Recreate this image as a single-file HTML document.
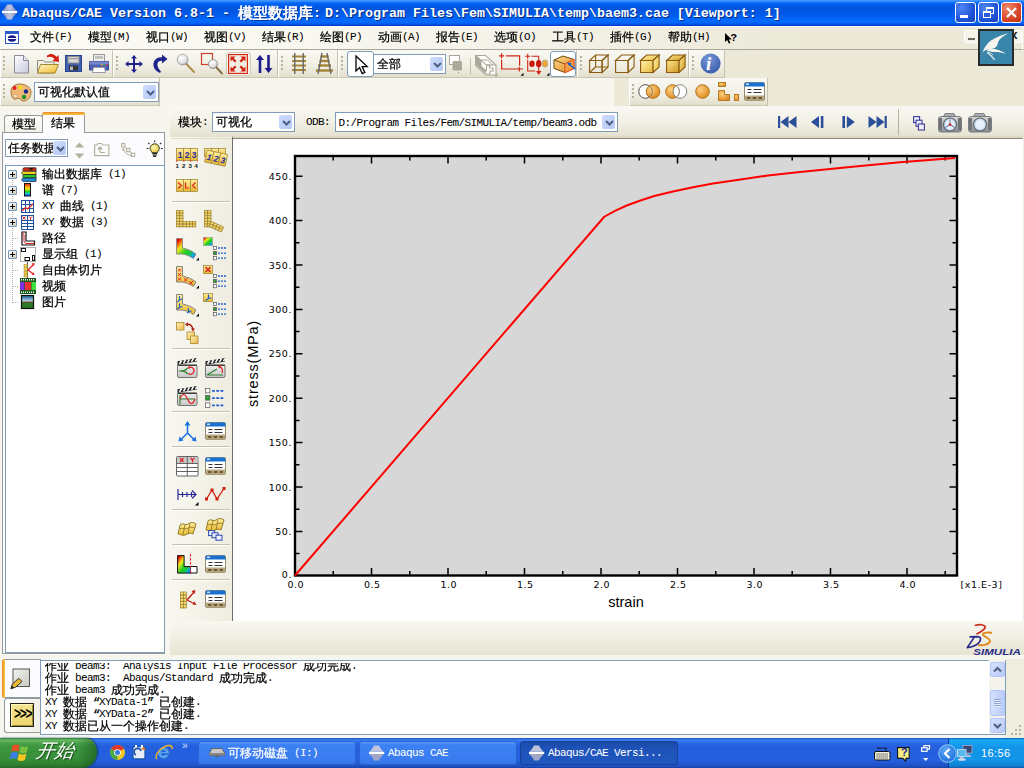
<!DOCTYPE html>
<html><head><meta charset="utf-8">
<title>Abaqus/CAE</title>
<style>
*{box-sizing:border-box;margin:0;padding:0}
html,body{width:1024px;height:768px;overflow:hidden;background:#f7f6ee}
body{position:relative;font-family:"Liberation Mono","WenQuanYi Zen Hei","Noto Sans CJK SC",monospace;font-size:12px;color:#000;line-height:14px}
.a{position:absolute}
svg{position:absolute;overflow:visible}
.t{position:absolute;white-space:pre;font-size:12px;line-height:14px}
.l{font-family:"Liberation Mono",monospace;font-size:11px;letter-spacing:-.6px;-webkit-text-stroke-width:.05px}
.c{font-family:"Liberation Mono","WenQuanYi Zen Hei","Noto Sans CJK SC",monospace;font-size:12px;letter-spacing:0;-webkit-text-stroke-width:.25px}
#title{left:0;top:0;width:1024px;height:26px;background:linear-gradient(#4a9cff 0,#2a86ff 1.5px,#0468f8 3px,#0058e6 6px,#0055e0 9px,#005ae8 14px,#0466fa 19px,#056cff 22px,#0458ec 24px,#0038c0 26px)}
#title .tt{position:absolute;left:22px;top:6px;color:#fff;font-weight:bold;white-space:pre;font-family:"Liberation Mono",monospace;font-size:13.33px;line-height:16px;text-shadow:1px 1px 0 #0a2a80}
#title .tt span{font-family:"Liberation Mono","WenQuanYi Zen Hei","Noto Sans CJK SC",monospace;font-size:15px;letter-spacing:0;-webkit-text-stroke:.7px #fff;position:relative;top:.6px}
#title .tt b{margin-right:-4px}
.wb{position:absolute;top:2px;width:21px;height:21px;border:1px solid #fff;border-radius:3px;background:radial-gradient(circle at 30% 25%,#4f86f5,#1f54d8 60%,#1641b8)}
.wb i{position:absolute;display:block}
.wb.x{background:radial-gradient(circle at 30% 25%,#f08866,#d9462a 60%,#b5300f)}
#menu{left:0;top:26px;width:1024px;height:23px;background:#ece9d8;border-top:1px solid #fff}
#menu .lt{position:absolute;left:0;top:0;width:800px;height:23px;background:linear-gradient(90deg,#fbfaf5 0,#f8f7f0 40%,#f2f0e5 75%,#ece9d8 100%)}
#menuline{left:0;top:49px;width:1024px;height:1px;background:#aca899}
.mi{position:absolute;top:30px;white-space:pre}
.tb{position:absolute;background:linear-gradient(#f9f8f2,#f1efe4 60%,#e3dfcd);border-right:1px solid #c5c2b0;border-bottom:1px solid #c9c6b4;border-left:1px solid #fff}
.grip{position:absolute;width:2px;background:repeating-linear-gradient(#b8b4a2 0 2px,transparent 2px 4px)}
.dd{position:absolute;background:#fff;border:1px solid #7f9db9;height:20px}
.dd .bt{position:absolute;right:2px;top:2px;width:13px;height:14px;border-radius:2px;background:linear-gradient(135deg,#d0dcfd,#b4c7f7)}
.dd .bt.s2{top:1px;right:1px;height:14px}
.dd .tx{position:absolute;left:3px;top:2.5px;white-space:pre}
.hb{position:absolute;background:#fff;border:1px solid #7f9db9;border-radius:3px}
.q{display:inline-block;width:6px;overflow:visible}
span.c{position:relative;top:.6px}
</style></head><body>
<!-- TITLE -->
<div class="a" id="title">
<svg style="left:2px;top:4px" width="16" height="16" viewBox="0 0 16 16" ><defs><linearGradient id="gapp" x1="0" y1="0" x2="1" y2="0"><stop offset="0" stop-color="#8088b8"/><stop offset=".5" stop-color="#c4c6e0"/><stop offset="1" stop-color="#8088b8"/></linearGradient></defs><path d="M5 .5h5c1 2.500 3 4.500 4.700 6.300h-14.400c1.700-1.800 3.700-3.800 4.700-6.300z" fill="url(#gapp)"/><rect x="0" y="6.900" width="15.200" height="2.100" fill="#fff"/><path d="M.300 9.100h14.400c-1.700 1.800-3.700 3.800-4.700 6.300h-5c-1-2.500-3-4.500-4.700-6.300z" fill="url(#gapp)"/></svg>
<div class="tt">Abaqus/CAE Version 6.8-1 - <span>模型数据库</span><b>:</b> D:\Program Files\Fem\SIMULIA\temp\baem3.cae [Viewport: 1]</div>
<div class="wb" style="left:955px"><i style="left:4px;top:12px;width:8px;height:3px;background:#fff"></i></div>
<div class="wb" style="left:978px"><i style="left:7px;top:4px;width:8px;height:7px;border:1px solid #fff;border-top-width:2px"></i><i style="left:4px;top:8px;width:8px;height:7px;border:1px solid #fff;border-top-width:2px;background:#2a5bd8"></i></div>
<div class="wb x" style="left:1001px"><svg width="19" height="19" viewBox="0 0 19 19" style="position:absolute;left:0;top:0"><path d="M5 5l9 9M14 5l-9 9" stroke="#fff" stroke-width="2.2"/></svg></div>
</div>
<!-- MENU -->
<div class="a" id="menu"><div class="lt"></div></div>
<div class="a" id="menuline"></div>
<svg style="left:5px;top:31px" width="14" height="13" viewBox="0 0 14 13" ><rect x=".5" y=".5" width="13" height="12" fill="#fff" stroke="#2a5bc7"/><rect x="1" y="1" width="12" height="2" fill="#2a5bc7"/><ellipse cx="7" cy="7.5" rx="4.2" ry="3.2" fill="#1a1a8a"/><rect x="2" y="7" width="10" height="1" fill="#fff"/></svg>
<div class="mi" style="left:30px"><span class="c">文件</span><span class="l">(F)</span></div>
<div class="mi" style="left:88px"><span class="c">模型</span><span class="l">(M)</span></div>
<div class="mi" style="left:146px"><span class="c">视口</span><span class="l">(W)</span></div>
<div class="mi" style="left:204px"><span class="c">视图</span><span class="l">(V)</span></div>
<div class="mi" style="left:262px"><span class="c">结果</span><span class="l">(R)</span></div>
<div class="mi" style="left:320px"><span class="c">绘图</span><span class="l">(P)</span></div>
<div class="mi" style="left:378px"><span class="c">动画</span><span class="l">(A)</span></div>
<div class="mi" style="left:436px"><span class="c">报告</span><span class="l">(E)</span></div>
<div class="mi" style="left:494px"><span class="c">选项</span><span class="l">(O)</span></div>
<div class="mi" style="left:552px"><span class="c">工具</span><span class="l">(T)</span></div>
<div class="mi" style="left:610px"><span class="c">插件</span><span class="l">(G)</span></div>
<div class="mi" style="left:668px"><span class="c">帮助</span><span class="l">(H)</span></div>
<svg style="left:724px;top:32px" width="16" height="13" viewBox="0 0 16 13" ><path d="M1 1v9l2.2-2 1.6 3.6 1.6-.7-1.6-3.5h3z" fill="#000"/></svg><div class="t l" style="left:730.5px;top:31px;font-weight:bold;font-size:11px">?</div>
<div class="a" style="left:964px;top:30px;width:58px;height:13px;background:#f4f3ea;border:1px solid #fff;border-radius:2px"></div>
<div class="a" style="left:968px;top:38px;width:7px;height:2px;background:#6b6a60"></div>
<div class="a l" style="left:1010px;top:29px;font-size:13px;font-weight:bold;color:#222">x</div>
<div class="a" style="left:1022px;top:26px;width:1px;height:24px;background:#fbfaf4"></div>
<!-- TOOLBARS -->
<div class="a" style="left:0;top:50px;width:1024px;height:56px;background:#ece9d8"></div>
<div class="a" style="left:160px;top:78px;width:454px;height:28px;background:#f7f6ee"></div>
<div class="tb" style="left:0px;top:50px;width:113px;height:28px"></div>
<div class="grip" style="left:3px;top:56px;height:16px"></div>
<div class="tb" style="left:113px;top:50px;width:165px;height:28px"></div>
<div class="grip" style="left:116px;top:56px;height:16px"></div>
<div class="tb" style="left:278px;top:50px;width:60px;height:28px"></div>
<div class="grip" style="left:281px;top:56px;height:16px"></div>
<div class="tb" style="left:338px;top:50px;width:239px;height:28px"></div>
<div class="grip" style="left:341px;top:56px;height:16px"></div>
<div class="tb" style="left:577px;top:50px;width:112px;height:28px"></div>
<div class="grip" style="left:580px;top:56px;height:16px"></div>
<div class="tb" style="left:689px;top:50px;width:36px;height:28px"></div>
<div class="grip" style="left:692px;top:56px;height:16px"></div>
<div class="tb" style="left:0px;top:78px;width:160px;height:28px"></div>
<div class="grip" style="left:3px;top:84px;height:16px"></div>
<div class="tb" style="left:629px;top:78px;width:139px;height:28px"></div>
<div class="grip" style="left:632px;top:84px;height:16px"></div>
<svg style="left:13px;top:54px" width="18" height="21" viewBox="0 0 18 21" ><defs><linearGradient id="gpaper" x1="0" y1="0" x2="1" y2="1"><stop offset="0" stop-color="#fff"/><stop offset="1" stop-color="#c8c8e0"/></linearGradient></defs><path d="M1.500 1.500h9l5 5v12.500h-14z" fill="url(#gpaper)" stroke="#8a8a96"/><path d="M10.500 1.500v5h5" fill="#e8e8f0" stroke="#8a8a96"/></svg>
<svg style="left:36px;top:52px" width="25" height="23" viewBox="0 0 25 23" ><defs><linearGradient id="gfold" x1="0" y1="0" x2="1" y2="1"><stop offset="0" stop-color="#fff8d0"/><stop offset="1" stop-color="#f0b820"/></linearGradient></defs><path d="M1.500 8.500h6l1.500 1.500h9v11h-16.500z" fill="#f4f0e0" stroke="#8a8a80"/><path d="M4.500 12.500h18l-3.500 8.500h-17.500z" fill="url(#gfold)" stroke="#a08830"/><path d="M11 3.500c3-2.500 7-2 9.500 1.500l2-2 .5 7-6.500-1 2-2c-2-2.500-5-3-7.500-1.500z" fill="#d42010"/></svg>
<svg style="left:65px;top:55px" width="17" height="17" viewBox="0 0 17 17" ><rect x=".5" y=".5" width="16" height="16" fill="#4060b0" stroke="#2a4490"/><rect x="3" y="1.500" width="11" height="6.500" fill="#d8d8d8" stroke="#888"/><rect x="4" y="3" width="9" height="1.200" fill="#999"/><rect x="4" y="10.500" width="9" height="5" fill="#333"/><rect x="5" y="11.500" width="3" height="3.500" fill="#bbb"/></svg>
<svg style="left:88px;top:53px" width="22" height="21" viewBox="0 0 22 21" ><rect x="5.500" y="1.500" width="11" height="7" fill="#eee" stroke="#999"/><rect x="7" y="3.200" width="8" height="2.500" fill="#bbb"/><path d="M1.500 8.500h19v8.500h-19z" fill="#5060b0" stroke="#38489a"/><rect x="1.500" y="8.500" width="19" height="3" fill="#7888d0"/><rect x="13" y="11" width="1.500" height="1.500" fill="#f0a020"/><rect x="15.500" y="11" width="1.500" height="1.500" fill="#30c040"/><rect x="18" y="11" width="1.500" height="1.500" fill="#e03030"/><path d="M5.500 14.500h11l1 5h-13z" fill="#fff" stroke="#99a"/></svg>
<svg style="left:124px;top:54px" width="20" height="20" viewBox="0 0 20 20" ><path d="M10 1l3 3.600h-2v4.400h4.400v-2l3.600 3-3.600 3v-2h-4.400v4.400h2l-3 3.600-3-3.600h2v-4.400h-4.400v2l-3.600-3 3.600-3v2h4.400v-4.400h-2z" fill="#23238e"/></svg>
<svg style="left:152px;top:54px" width="16" height="20" viewBox="0 0 16 20" ><path d="M8 19c-5-2-8-7-6-11.500 1.500-3 4.500-4.500 8-4.200v-2.800l5.500 4.500-5.500 4.500v-2.800c-2.500-.2-4 .8-4.500 2.800-.6 2.500 1 5.500 3.500 8z" fill="#23238e"/></svg>
<svg style="left:176px;top:53px" width="20" height="21" viewBox="0 0 20 21" ><defs><radialGradient id="glens" cx=".4" cy=".35" r=".7"><stop offset="0" stop-color="#fff"/><stop offset=".7" stop-color="#e0e0e0"/><stop offset="1" stop-color="#909090"/></radialGradient></defs><path d="M9.500 10l8.500 9" stroke="#b09050" stroke-width="2" stroke-linecap="round"/><circle cx="6.600" cy="6.600" r="5.400" fill="url(#glens)" stroke="#999" stroke-width=".8"/></svg>
<svg style="left:200px;top:52px" width="24" height="23" viewBox="0 0 24 23" ><rect x="1.500" y="1.500" width="11" height="11" fill="none" stroke="#d04030" stroke-width="1.200"/><path d="M15 14l7 7.500" stroke="#a08050" stroke-width="2" stroke-linecap="round"/><path d="M16 15l6 6.500" stroke="#333" stroke-width=".6"/><circle cx="13" cy="12" r="4.500" fill="url(#glens)" stroke="#888" stroke-width=".8"/></svg>
<div class="a" style="left:226px;top:52px;width:25px;height:24px;background:#f3f2ea;border:1px solid #cfccbc;border-radius:3px"></div>
<svg style="left:227px;top:53px" width="22" height="22" viewBox="0 0 22 22" ><rect x="1.500" y="1.500" width="19" height="19" fill="#efede5" stroke="#d42a10" stroke-width="1"/><rect x="2.500" y="2.500" width="17" height="17" fill="none" stroke="#f0b0a0" stroke-width=".6"/><path d="M3.500 3.500h5l-1.700 1.700 2.700 2.700-1.600 1.600-2.700-2.700-1.700 1.700zM18.500 3.500v5l-1.700-1.700-2.700 2.700-1.600-1.600 2.700-2.700-1.700-1.700zM3.500 18.500v-5l1.700 1.700 2.700-2.700 1.600 1.600-2.700 2.700 1.700 1.700zM18.500 18.500h-5l1.700-1.700-2.700-2.700 1.600-1.600 2.700 2.700 1.700-1.700z" fill="#d42010"/></svg>
<svg style="left:255px;top:54px" width="20" height="20" viewBox="0 0 20 20" ><path d="M5 1l4 5h-2.700v13h-2.600v-13h-2.700zM13.500 19l4-5h-2.700v-13h-2.600v13h-2.700z" fill="#1c1c8c"/></svg>
<svg style="left:291px;top:53px" width="16" height="21" viewBox="0 0 16 21" ><path d="M1 3.500h14M1 8h14M1 12.500h14M1 17h14" stroke="#a88838" stroke-width="2.200"/><path d="M3.800 0v21M12.200 0v21" stroke="#686868" stroke-width="1.400"/></svg>
<svg style="left:315px;top:53px" width="19" height="21" viewBox="0 0 19 21" ><path d="M5.500 3.500h8M4.500 8h10M3 12.500h13M1 17.500h17" stroke="#a88838" stroke-width="2.400"/><path d="M7 0l-4 21M12 0l4 21" stroke="#686868" stroke-width="1.400"/></svg>
<div class="hb" style="left:347px;top:51px;width:27px;height:26px"></div>
<svg style="left:355px;top:55px" width="14" height="20" viewBox="0 0 14 20" ><path d="M1 1v15l3.600-3.400 2.600 6 2.600-1.100-2.600-5.900h5z" fill="#fff" stroke="#000" stroke-width="1.300"/></svg>
<svg style="left:449px;top:55px" width="14" height="18" viewBox="0 0 14 18" ><rect x=".5" y=".5" width="10" height="9" fill="#fff" stroke="#a8a598"/><rect x="3.500" y="6" width="9.500" height="9.500" rx="1.500" fill="#aca899"/><rect x="9" y="17" width="1" height="1" fill="#888"/></svg>
<div class="a" style="left:470px;top:58px;width:1px;height:17px;background:#c5c2b0"></div>
<svg style="left:475px;top:53px" width="23" height="24" viewBox="0 0 23 24" ><path d="M.600 2.500h10l10.400 9.500v10h-10l-10.400-9.500z" fill="#fdfdfa" stroke="#aca899" stroke-width="1.100"/><path d="M.600 2.500v9l10.400 9.500v-9z" fill="#aca899"/><path d="M.600 2.500l10.400 9.500h10" fill="none" stroke="#aca899" stroke-width="1.100"/><path d="M6 7h6.500l5 5h-6.500zM6 7v6l5.500 5v-6z" fill="#fdfdfa" stroke="#aca899" stroke-width="1"/><path d="M11.500 12h3v3h3.500v3h-3v3h-3.500" fill="none" stroke="#aca899" stroke-width="1.200"/><path d="M22.500 20.500v3h-3z" fill="#aca899"/></svg>
<svg style="left:499px;top:53px" width="25" height="23" viewBox="0 0 25 23" ><path d="M7 2.900h13.600v9.800M2.600 6.800v9.200h14.400" fill="none" stroke="#d02818" stroke-width="1.200"/><path d="M0 2.900h5.200M2.600 .3v5.200M17 16h7M20.300 13.700v4.800" stroke="#d02818" stroke-width="1.200"/><path d="M24.500 19.800v2.900h-3z" fill="#000"/></svg>
<svg style="left:525px;top:53px" width="25" height="23" viewBox="0 0 25 23" ><path d="M6.500 3.200h7.200v17M2.700 6.800v11.200h7.500" fill="none" stroke="#d02818" stroke-width="1.100"/><path d="M.200 3.200h5M2.700 .7v5M12 18.500l1.700 2.500 1.700-2.500z" stroke="#d02818" stroke-width="1.100" fill="#d02818"/><ellipse cx="7" cy="10.700" rx="2.700" ry="3.300" fill="#cc1808"/><ellipse cx="13.700" cy="10.700" rx="2.700" ry="3.600" fill="#cc1808"/><rect x="17.500" y="7.200" width="5" height="6.800" rx="1.800" fill="#f0a830" stroke="#a8a090" stroke-width=".8"/><path d="M24.500 19.800v2.900h-3z" fill="#000"/></svg>
<div class="hb" style="left:550px;top:51px;width:26px;height:26px"></div>
<svg style="left:553px;top:55px" width="22" height="18" viewBox="0 0 22 18" ><defs><linearGradient id="gor" x1="0" y1="0" x2="1" y2="1"><stop offset="0" stop-color="#ffd890"/><stop offset="1" stop-color="#e08818"/></linearGradient></defs><path d="M1 5l9-4 11 3.500v9l-9 4-11-4z" fill="url(#gor)" stroke="#6a4a10" stroke-width="1"/><path d="M1 5l11 4v8.500M12 9l9-4.500" fill="none" stroke="#6a4a10" stroke-width=".9"/><path d="M12 9l9-4.500v9l-9 4z" fill="#f0a040" stroke="#f06030" stroke-width="1.200"/><path d="M22 14l-6-5" stroke="#1060d0" stroke-width="1.600"/><path d="M14 7.500l4.500.5-2.500 3z" fill="#1060d0"/></svg>
<svg style="left:589px;top:54px" width="20" height="19" viewBox="0 0 20 19" ><defs><linearGradient id="gy" x1="0" y1="0" x2="1" y2="1"><stop offset="0" stop-color="#fff4b0"/><stop offset="1" stop-color="#e8b838"/></linearGradient><linearGradient id="gy2" x1="0" y1="0" x2="1" y2="1"><stop offset="0" stop-color="#ffe890"/><stop offset="1" stop-color="#d09820"/></linearGradient></defs><path d="M.600 6.500h12.500v12h-12.500z" fill="none" stroke="#8a5a10" stroke-width="1.100"/><path d="M.600 6.500l6-5.500h12.500l-6 5.500z" fill="none" stroke="#8a5a10" stroke-width="1.100"/><path d="M13.100 6.500l6-5.500v12l-6 5.500z" fill="none" stroke="#8a5a10" stroke-width="1.100"/><path d="M6.600 1v12h12.500M6.600 13l-6 5.500" fill="none" stroke="#8a5a10" stroke-width="1.100"/></svg>
<svg style="left:615px;top:54px" width="20" height="19" viewBox="0 0 20 19" ><defs><linearGradient id="gy" x1="0" y1="0" x2="1" y2="1"><stop offset="0" stop-color="#fff4b0"/><stop offset="1" stop-color="#e8b838"/></linearGradient><linearGradient id="gy2" x1="0" y1="0" x2="1" y2="1"><stop offset="0" stop-color="#ffe890"/><stop offset="1" stop-color="#d09820"/></linearGradient></defs><path d="M.600 6.500h12.500v12h-12.500z" fill="none" stroke="#8a5a10" stroke-width="1.100"/><path d="M.600 6.500l6-5.500h12.500l-6 5.500z" fill="none" stroke="#8a5a10" stroke-width="1.100"/><path d="M13.100 6.500l6-5.500v12l-6 5.500z" fill="none" stroke="#8a5a10" stroke-width="1.100"/></svg>
<svg style="left:640px;top:54px" width="20" height="19" viewBox="0 0 20 19" ><defs><linearGradient id="gy" x1="0" y1="0" x2="1" y2="1"><stop offset="0" stop-color="#fff4b0"/><stop offset="1" stop-color="#e8b838"/></linearGradient><linearGradient id="gy2" x1="0" y1="0" x2="1" y2="1"><stop offset="0" stop-color="#ffe890"/><stop offset="1" stop-color="#d09820"/></linearGradient></defs><path d="M.600 6.500h12.500v12h-12.500z" fill="url(#gy)" stroke="#8a5a10" stroke-width="1.100"/><path d="M.600 6.500l6-5.500h12.500l-6 5.500z" fill="url(#gy)" stroke="#8a5a10" stroke-width="1.100"/><path d="M13.100 6.500l6-5.500v12l-6 5.500z" fill="url(#gy)" stroke="#8a5a10" stroke-width="1.100"/></svg>
<svg style="left:666px;top:54px" width="20" height="19" viewBox="0 0 20 19" ><defs><linearGradient id="gy" x1="0" y1="0" x2="1" y2="1"><stop offset="0" stop-color="#fff4b0"/><stop offset="1" stop-color="#e8b838"/></linearGradient><linearGradient id="gy2" x1="0" y1="0" x2="1" y2="1"><stop offset="0" stop-color="#ffe890"/><stop offset="1" stop-color="#d09820"/></linearGradient></defs><path d="M.600 6.500h12.500v12h-12.500z" fill="url(#gy2)" stroke="#8a5a10" stroke-width="1.100"/><path d="M.600 6.500l6-5.500h12.500l-6 5.500z" fill="url(#gy2)" stroke="#8a5a10" stroke-width="1.100"/><path d="M13.100 6.500l6-5.500v12l-6 5.500z" fill="url(#gy2)" stroke="#8a5a10" stroke-width="1.100"/></svg>
<svg style="left:700px;top:53px" width="22" height="22" viewBox="0 0 22 22" ><defs><radialGradient id="ginfo" cx=".4" cy=".3" r=".8"><stop offset="0" stop-color="#7898d8"/><stop offset="1" stop-color="#3458a8"/></radialGradient></defs><circle cx="10.600" cy="10.500" r="10" fill="url(#ginfo)"/></svg><div class="a" style="left:706px;top:53px;font-family:'Liberation Serif',serif;font-style:italic;font-weight:bold;font-size:19px;line-height:21px;color:#fff">i</div>
<svg style="left:9px;top:83px" width="23" height="19" viewBox="0 0 23 19" ><path d="M2 8c0-4 4-7 9-7s11 3 11 8-3 9-8 9c-2 0-2-2-4-2.500s-3 1.500-5 .5-3-4-3-8z" fill="#f0b878" stroke="#a87838" stroke-width="1"/><circle cx="5.500" cy="5" r="2" fill="#e02020"/><circle cx="11.500" cy="4.500" r="2" fill="#f0e020"/><circle cx="17" cy="8.500" r="2.200" fill="#182890"/><circle cx="15" cy="14" r="2.200" fill="#189030"/><ellipse cx="6.500" cy="13" rx="2" ry="1.300" fill="#fff" stroke="#a87838" stroke-width=".5"/></svg>
<svg style="left:638px;top:84px" width="23" height="15" viewBox="0 0 23 15" ><defs><radialGradient id="gorb" cx=".35" cy=".35" r=".8"><stop offset="0" stop-color="#ffd080"/><stop offset="1" stop-color="#d88010"/></radialGradient></defs><circle cx="7.500" cy="7.500" r="6.800" fill="#fff" stroke="#777" stroke-width=".9"/><circle cx="15" cy="7.500" r="6.800" fill="url(#gorb)" stroke="#a86810" stroke-width=".9"/><circle cx="7.500" cy="7.500" r="6.800" fill="none" stroke="#777" stroke-width=".9"/></svg>
<svg style="left:665px;top:84px" width="23" height="15" viewBox="0 0 23 15" ><circle cx="15" cy="7.500" r="6.800" fill="#fff" stroke="#777" stroke-width=".9"/><circle cx="7.500" cy="7.500" r="6.800" fill="url(#gorb)" stroke="#a86810" stroke-width=".9"/><path d="M11.250 1.800a6.800 6.800 0 0 1 0 11.400a6.800 6.800 0 0 1 0-11.400z" fill="#fff" stroke="#777" stroke-width=".9"/></svg>
<svg style="left:695px;top:84px" width="15" height="15" viewBox="0 0 15 15" ><circle cx="7.500" cy="7.500" r="6.800" fill="url(#gorb)" stroke="#a86810" stroke-width=".9"/></svg>
<svg style="left:718px;top:82px" width="22" height="19" viewBox="0 0 22 19" ><rect x=".5" y=".5" width="7" height="4" fill="url(#gorb)" stroke="#a86810" stroke-width=".8"/><path d="M.500 8.500h6v4h5v6h-11z" fill="url(#gorb)" stroke="#a86810" stroke-width=".8"/><rect x="16.500" y="12.500" width="4" height="6" fill="url(#gorb)" stroke="#a86810" stroke-width=".8"/></svg>
<svg style="left:744px;top:82px" width="21" height="19" viewBox="0 0 21 19" ><rect x=".5" y=".5" width="20" height="18" rx="1.500" fill="#fff" stroke="#8a8060" stroke-width=".9"/><path d="M.500 4.500v-2.500a1.500 1.500 0 0 1 1.500-1.500h17a1.500 1.500 0 0 1 1.500 1.500v2.500z" fill="#1870d0"/><rect x="2" y="1.600" width="3" height="1.200" fill="#fff"/><path d="M3.500 7.500h4M9.500 7.500h8M3.500 10.500h4M9.500 10.500h8" stroke="#333" stroke-width="1.100"/><rect x="1" y="13.5" width="19" height="5" fill="#b8a880"/><path d="M3 16h3.500M8.75 16h3.500M14.5 16h3.500" stroke="#6a5a38" stroke-width="2"/></svg>
<div class="dd" style="left:373px;top:54px;width:73px"><div class="tx c">全部</div><div class="bt s"><svg style="left:2.500px;top:4.500px" width="9" height="6" viewBox="0 0 9 6"><path d="M1 1l3.500 3.500 3.500-3.500" fill="none" stroke="#4d6185" stroke-width="2"/></svg></div></div>
<div class="dd" style="left:34px;top:82px;width:125px"><div class="tx c">可视化默认值</div><div class="bt s"><svg style="left:2.500px;top:4.500px" width="9" height="6" viewBox="0 0 9 6"><path d="M1 1l3.500 3.500 3.500-3.500" fill="none" stroke="#4d6185" stroke-width="2"/></svg></div></div>
<svg style="left:978px;top:29px" width="36" height="37" viewBox="0 0 36 37" ><rect x="1" y="1" width="34" height="35" fill="#3a86aa" stroke="#2a2a2a" stroke-width="2"/><path d="M30.500 4.200c-5 1.300-9 2.800-12.500 4.600-4 2-6.500 3.500-8.500 6-2.500 3-4.500 6-4.500 8.500 1.500-1.500 2.500-2.200 4-2.500 3-.5 6-.8 8-2 2.500-1.500 2.500-4 3.500-6.500 1.200-3 5-5.500 10-8.100z" fill="#f6f4ec"/><path d="M8.500 21.500c3-1.600 6.500-1.800 10-1 3.500.8 6.500 2.200 9.500 4.200-4-1.200-7.500-1.800-10.500-1.800-3.500 0-6 .2-9-1.400z" fill="#f6f4ec"/><path d="M9 23.500c1.500.8 3 2 4.200 3.300s2.500 2.800 3.500 4" stroke="#f6f4ec" stroke-width="1.200" fill="none"/><path d="M10 23c2 .5 3.500 1.500 5 3" stroke="#f6f4ec" stroke-width=".8" fill="none"/></svg>
<!-- LEFT -->
<div class="a" style="left:4px;top:115px;width:39px;height:18px;border:1px solid #919b9c;border-bottom:none;border-radius:3px 3px 0 0;background:linear-gradient(#fdfdfb,#f1f0e8)"></div>
<div class="a" style="left:2px;top:132px;width:163px;height:522px;background:#fcfcfe;border:1px solid #919b9c"></div>
<div class="a" style="left:42px;top:112px;width:43px;height:21px;border:1px solid #919b9c;border-bottom:none;border-radius:3px 3px 0 0;background:#fcfcfe"></div>
<div class="a" style="left:42px;top:112px;width:43px;height:3px;border-radius:3px 3px 0 0;background:linear-gradient(#e68b2c,#ffc73c)"></div>
<div class="t c" style="left:12px;top:118px">模型</div>
<div class="t c" style="left:51px;top:117px">结果</div>
<div class="dd" style="left:5px;top:139px;width:63px;height:18px"><div class="tx c" style="top:2px;left:2px;width:46px;overflow:hidden">任务数据库</div><div class="bt s2"><svg style="left:2.500px;top:4.500px" width="9" height="6" viewBox="0 0 9 6"><path d="M1 1l3.500 3.500 3.500-3.500" fill="none" stroke="#4d6185" stroke-width="2"/></svg></div></div>
<svg style="left:74px;top:141.5px" width="12" height="18" viewBox="0 0 12 18" ><path d="M5.500 .5l4.700 5h-9.400zM5.500 16.500l4.700-5h-9.400z" fill="#b4b09e"/></svg>
<svg style="left:94px;top:143px" width="16" height="14" viewBox="0 0 16 14" ><path d="M.600 12.600v-10.600h2.400l1-1.500h3.500l1 1.500h6.400v10.600z" fill="none" stroke="#b4b09e" stroke-width="1.200"/><path d="M6 9.500v-5M3.800 6.500l2.200-2.500 2.200 2.500M6 9.500h5" fill="none" stroke="#b4b09e" stroke-width="1.200"/></svg>
<svg style="left:121px;top:143px" width="15" height="15" viewBox="0 0 15 15" ><rect x=".6" y=".6" width="3.300" height="3.300" fill="none" stroke="#b4b09e" stroke-width="1.100"/><rect x="5.600" y="5.400" width="3.300" height="3.300" fill="none" stroke="#b4b09e" stroke-width="1.100"/><rect x="10.400" y="10.200" width="3.300" height="3.300" fill="none" stroke="#b4b09e" stroke-width="1.100"/><path d="M3.900 3.900l1.700 1.500M8.900 8.700l1.500 1.500M2.300 4.500c0 4 3 7.500 8 8" fill="none" stroke="#b4b09e" stroke-width="1"/><path d="M1 5.500l1.300 3 1.700-2.500z" fill="#b4b09e"/></svg>
<svg style="left:146px;top:140px" width="18" height="19" viewBox="0 0 18 19" ><defs><radialGradient id="gbulb" cx=".4" cy=".4" r=".7"><stop offset="0" stop-color="#fff8b0"/><stop offset="1" stop-color="#e8c040"/></radialGradient></defs><path d="M8.700 .5v1.800M2.200 2.800l1.300 1.300M15.200 2.800l-1.300 1.300M.700 8.500h1.800M16.700 8.500h-1.800" stroke="#222" stroke-width="1.100"/><path d="M8.700 3.800a4.600 4.600 0 0 1 4.600 4.600c0 2-1.600 2.800-1.900 4.300h-5.400c-.3-1.500-1.900-2.300-1.900-4.300a4.600 4.600 0 0 1 4.600-4.600z" fill="url(#gbulb)" stroke="#2a3a1a" stroke-width="1"/><path d="M6.300 13.500h4.800M6.500 15h4.400M7.300 16.400h2.800" stroke="#222" stroke-width="1.100"/></svg>
<div class="a" style="left:5px;top:165px;width:160px;height:488px;background:#fff;border:1px solid #7f9db9"></div>
<div class="a" style="left:12px;top:180px;width:1px;height:123px;background:repeating-linear-gradient(#b0ae9e 0 1px,transparent 1px 2px)"></div>
<div class="a" style="left:13px;top:238px;width:6px;height:1px;background:repeating-linear-gradient(90deg,#b0ae9e 0 1px,transparent 1px 2px)"></div>
<div class="a" style="left:13px;top:270px;width:6px;height:1px;background:repeating-linear-gradient(90deg,#b0ae9e 0 1px,transparent 1px 2px)"></div>
<div class="a" style="left:13px;top:286px;width:6px;height:1px;background:repeating-linear-gradient(90deg,#b0ae9e 0 1px,transparent 1px 2px)"></div>
<div class="a" style="left:13px;top:302px;width:6px;height:1px;background:repeating-linear-gradient(90deg,#b0ae9e 0 1px,transparent 1px 2px)"></div>
<div class="a" style="left:8px;top:170px;width:9px;height:9px;border:1px solid #7898b5;border-radius:1px;background:linear-gradient(135deg,#fff,#d0ccc0)"></div><div class="a" style="left:10px;top:174px;width:5px;height:1px;background:#000"></div><div class="a" style="left:12px;top:172px;width:1px;height:5px;background:#000"></div>
<div class="t" style="left:42px;top:167px"><span class="c">输出数据库</span><span class="l"> (1)</span></div>
<div class="a" style="left:8px;top:186px;width:9px;height:9px;border:1px solid #7898b5;border-radius:1px;background:linear-gradient(135deg,#fff,#d0ccc0)"></div><div class="a" style="left:10px;top:190px;width:5px;height:1px;background:#000"></div><div class="a" style="left:12px;top:188px;width:1px;height:5px;background:#000"></div>
<div class="t" style="left:42px;top:183px"><span class="c">谱</span><span class="l"> (7)</span></div>
<div class="a" style="left:8px;top:202px;width:9px;height:9px;border:1px solid #7898b5;border-radius:1px;background:linear-gradient(135deg,#fff,#d0ccc0)"></div><div class="a" style="left:10px;top:206px;width:5px;height:1px;background:#000"></div><div class="a" style="left:12px;top:204px;width:1px;height:5px;background:#000"></div>
<div class="t" style="left:42px;top:199px"><span class="l">XY </span><span class="c">曲线</span><span class="l"> (1)</span></div>
<div class="a" style="left:8px;top:218px;width:9px;height:9px;border:1px solid #7898b5;border-radius:1px;background:linear-gradient(135deg,#fff,#d0ccc0)"></div><div class="a" style="left:10px;top:222px;width:5px;height:1px;background:#000"></div><div class="a" style="left:12px;top:220px;width:1px;height:5px;background:#000"></div>
<div class="t" style="left:42px;top:215px"><span class="l">XY </span><span class="c">数据</span><span class="l"> (3)</span></div>
<div class="t" style="left:42px;top:231px"><span class="c">路径</span></div>
<div class="a" style="left:8px;top:250px;width:9px;height:9px;border:1px solid #7898b5;border-radius:1px;background:linear-gradient(135deg,#fff,#d0ccc0)"></div><div class="a" style="left:10px;top:254px;width:5px;height:1px;background:#000"></div><div class="a" style="left:12px;top:252px;width:1px;height:5px;background:#000"></div>
<div class="t" style="left:42px;top:247px"><span class="c">显示组</span><span class="l"> (1)</span></div>
<div class="t" style="left:42px;top:263px"><span class="c">自由体切片</span></div>
<div class="t" style="left:42px;top:279px"><span class="c">视频</span></div>
<div class="t" style="left:42px;top:295px"><span class="c">图片</span></div>
<svg style="left:20px;top:167px" width="17" height="15" viewBox="0 0 17 15" ><defs><linearGradient id="grb" x1="0" y1="0" x2="0" y2="1"><stop offset="0" stop-color="#e01010"/><stop offset=".25" stop-color="#f0a010"/><stop offset=".45" stop-color="#e8e810"/><stop offset=".65" stop-color="#20d020"/><stop offset=".82" stop-color="#10c0e0"/><stop offset="1" stop-color="#1030e0"/></linearGradient></defs><path d="M4.500 .8h11.500v3.400h-11.500c-2.200 0-2.200-3.400 0-3.400z" fill="#e02818" stroke="#222" stroke-width=".8"/><path d="M3.500 4.200h12.500v3.400h-12.500c-2.200 0-2.200-3.400 0-3.400z" fill="#f0d020" stroke="#222" stroke-width=".8"/><path d="M4.500 7.600h11.500v3.400h-11.500c-2.200 0-2.200-3.400 0-3.400z" fill="#30c830" stroke="#222" stroke-width=".8"/><path d="M3.500 11h12.500v3.400h-12.500c-2.200 0-2.200-3.400 0-3.400z" fill="#2090e8" stroke="#222" stroke-width=".8"/><path d="M8 1.200h6l-3 2z" fill="#111"/></svg>
<svg style="left:24px;top:183px" width="8" height="14" viewBox="0 0 8 14" ><rect x=".5" y=".5" width="6" height="12.500" fill="url(#grb)" stroke="#111" stroke-width="1"/></svg>
<svg style="left:21px;top:200px" width="13" height="13" viewBox="0 0 13 13" ><rect x=".5" y=".5" width="12" height="12" fill="#fff" stroke="#2050a0"/><path d="M4.500 .5v12M8.500 .5v12M.500 4.500h12M.500 8.500h12" stroke="#2050a0" stroke-width="1"/><path d="M1 11l3.500-3.500 2 1.500 5.500-5" fill="none" stroke="#e02020" stroke-width="1.100"/></svg>
<svg style="left:21px;top:215px" width="13" height="15" viewBox="0 0 13 15" ><rect x=".5" y=".5" width="12" height="14" fill="#fff" stroke="#2050a0"/><path d="M6.500 .5v14M.500 5.500h12M.500 8.500h12M.500 11.500h12" stroke="#2050a0" stroke-width="1"/><path d="M1.500 1.500l3 3M4.500 1.500l-3 3M8 1.500l1.500 1.500 1.500-1.500M9.500 3v2" stroke="#e02020" stroke-width="1" fill="none"/></svg>
<svg style="left:21px;top:231px" width="14" height="15" viewBox="0 0 14 15" ><path d="M1 1h4v9h8.500v4h-12.500z" fill="#fff" stroke="#111" stroke-width="1.200"/><path d="M.800 1.500l2.200 2v6c0 2 1 3 3 3h7.500" fill="none" stroke="#e02020" stroke-width="1"/></svg>
<svg style="left:20px;top:247px" width="16" height="15" viewBox="0 0 16 15" ><rect x=".5" y=".5" width="15" height="14" fill="#fff" stroke="#b0b0b0"/><rect x="1.500" y="1.500" width="4" height="3" fill="#fff" stroke="#111"/><rect x="5" y="10.500" width="4.500" height="3" fill="#fff" stroke="#111"/><rect x="12.500" y="8.500" width="2" height="5" fill="#fff" stroke="#111"/></svg>
<svg style="left:23px;top:262px" width="12" height="16" viewBox="0 0 12 16" ><path d="M4.500 0v16" stroke="#555" stroke-width="1"/><rect x="1" y="2.500" width="3.500" height="2.500" fill="#f0d040" stroke="#a08020" stroke-width=".5"/><rect x="1" y="5.800" width="3.500" height="2.500" fill="#f0d040" stroke="#a08020" stroke-width=".5"/><rect x="1" y="9.100" width="3.500" height="2.500" fill="#f0d040" stroke="#a08020" stroke-width=".5"/><rect x="1" y="12.400" width="3.500" height="2.500" fill="#f0d040" stroke="#a08020" stroke-width=".5"/><path d="M5 8l6-6M5 8l6 4.500" stroke="#e02020" stroke-width="1.200"/><path d="M11.500 1l-3 .5 2.500 2.500zM11.500 13l-3-.3 2-2.500z" fill="#e02020"/></svg>
<svg style="left:20px;top:278px" width="16" height="16" viewBox="0 0 16 16" ><rect x="0" y="0" width="16" height="16" fill="#1a5a1a"/><path d="M1 1.800h14M1 14.200h14" stroke="#fff" stroke-width="1.400" stroke-dasharray="1 1"/><rect x="0" y="4" width="4.500" height="8" fill="#8030e0"/><rect x="5" y="4" width="6" height="8" fill="#e83030"/><rect x="11.500" y="4" width="4.500" height="8" fill="#40e040"/></svg>
<svg style="left:21px;top:295px" width="13" height="14" viewBox="0 0 13 14" ><defs><linearGradient id="gsky" x1="0" y1="0" x2="0" y2="1"><stop offset="0" stop-color="#2060a0"/><stop offset="1" stop-color="#d0e0f0"/></linearGradient></defs><rect x=".5" y=".5" width="12" height="13" fill="#2a7a2a" stroke="#111" stroke-width="1.200"/><rect x="1.200" y="1.200" width="10.600" height="5.500" fill="url(#gsky)"/><rect x="1.200" y="6.700" width="10.600" height="1" fill="#704020"/></svg>
<!-- CONTEXT -->
<div class="a" style="left:170px;top:106px;width:854px;height:31px;background:linear-gradient(#f9f8f2,#f3f1e6 50%,#e4e1cf)"></div>
<div class="t" style="left:178px;top:115px"><span class="c">模块</span><span class="l">:</span></div>
<div class="dd" style="left:212px;top:112px;width:83px"><div class="tx c">可视化</div><div class="bt s"><svg style="left:2.500px;top:4.500px" width="9" height="6" viewBox="0 0 9 6"><path d="M1 1l3.500 3.500 3.500-3.500" fill="none" stroke="#4d6185" stroke-width="2"/></svg></div></div>
<div class="t l" style="left:306px;top:115px">ODB:</div>
<div class="dd" style="left:335px;top:112px;width:283px"><div class="tx l" style="left:2.500px">D:/Program Files/Fem/SIMULIA/temp/beam3.odb</div><div class="bt s"><svg style="left:2.500px;top:4.500px" width="9" height="6" viewBox="0 0 9 6"><path d="M1 1l3.500 3.500 3.500-3.500" fill="none" stroke="#4d6185" stroke-width="2"/></svg></div></div>
<svg style="left:778px;top:116px" width="19" height="12" viewBox="0 0 19 12" ><rect x="0" y="0" width="2.200" height="12" fill="#2b4f99"/><path d="M10.500 0v12l-8-6zM18.500 0v12l-8-6z" fill="#2b4f99"/></svg>
<svg style="left:811px;top:116px" width="13" height="12" viewBox="0 0 13 12" ><path d="M8 0v12l-8-6z" fill="#2b4f99"/><rect x="9.800" y="0" width="2.600" height="12" fill="#2b4f99"/></svg>
<svg style="left:842px;top:116px" width="13" height="12" viewBox="0 0 13 12" ><rect x=".4" y="0" width="2.600" height="12" fill="#2b4f99"/><path d="M4.800 0v12l8-6z" fill="#2b4f99"/></svg>
<svg style="left:868px;top:116px" width="19" height="12" viewBox="0 0 19 12" ><path d="M.500 0v12l8-6zM8.500 0v12l8-6z" fill="#2b4f99"/><rect x="16.600" y="0" width="2.200" height="12" fill="#2b4f99"/></svg>
<div class="a" style="left:898px;top:109px;width:1px;height:26px;background:#b5b19f"></div>
<svg style="left:913px;top:115.5px" width="13" height="15" viewBox="0 0 13 15" ><rect x=".6" y=".6" width="6" height="6" fill="#f0f0fa" stroke="#3a3a9a" stroke-width="1.100"/><rect x="3" y="4.200" width="6" height="6" fill="#f0f0fa" stroke="#3a3a9a" stroke-width="1.100"/><rect x="5.400" y="8" width="6" height="6" fill="#f0f0fa" stroke="#3a3a9a" stroke-width="1.100"/></svg>
<svg style="left:938px;top:113px" width="24" height="20" viewBox="0 0 24 20" ><defs><linearGradient id="gcam" x1="0" y1="0" x2="0" y2="1"><stop offset="0" stop-color="#d8d8d8"/><stop offset="1" stop-color="#8a8e92"/></linearGradient></defs><path d="M7 .5h9l1.500 3h-12z" fill="#a8acb0" stroke="#707478" stroke-width=".8"/><rect x=".5" y="3.500" width="23" height="15.500" rx="2.500" fill="url(#gcam)" stroke="#707478" stroke-width=".9"/><rect x="1" y="5" width="3" height="12" fill="#707478"/><rect x="20" y="5" width="3" height="12" fill="#707478"/><circle cx="12" cy="11.500" r="6.500" fill="#c8dcf4" stroke="#606468" stroke-width="1.200"/><circle cx="12" cy="11.500" r="4.500" fill="#e8f2fc"/><path d="M12 11.500v-5M12 11.500l-4.500 3M12 11.500l4.500 3" stroke="#7088a8" stroke-width="1.100"/><circle cx="12" cy="11.500" r="1.300" fill="#e02020"/></svg>
<svg style="left:968px;top:113px" width="24" height="20" viewBox="0 0 24 20" ><defs><linearGradient id="gcam" x1="0" y1="0" x2="0" y2="1"><stop offset="0" stop-color="#d8d8d8"/><stop offset="1" stop-color="#8a8e92"/></linearGradient></defs><path d="M7 .5h9l1.500 3h-12z" fill="#a8acb0" stroke="#707478" stroke-width=".8"/><rect x=".5" y="3.500" width="23" height="15.500" rx="2.500" fill="url(#gcam)" stroke="#707478" stroke-width=".9"/><rect x="1" y="5" width="3" height="12" fill="#707478"/><rect x="20" y="5" width="3" height="12" fill="#707478"/><circle cx="12" cy="11.500" r="6.500" fill="#c8dcf4" stroke="#606468" stroke-width="1.200"/><circle cx="12" cy="11.500" r="4.500" fill="#e8f2fc"/></svg>
<!-- TOOLBOX -->
<div class="a" style="left:170px;top:137px;width:62px;height:484px;background:linear-gradient(90deg,#f8f7f0,#efede0)"></div>
<div class="a" style="left:171px;top:138px;width:61px;height:1px;background:#dedbc8"></div>
<div class="a" style="left:172px;top:201px;width:58px;height:1px;background:#c5c2b0"></div><div class="a" style="left:172px;top:202px;width:58px;height:1px;background:#fff"></div>
<div class="a" style="left:172px;top:348px;width:58px;height:1px;background:#c5c2b0"></div><div class="a" style="left:172px;top:349px;width:58px;height:1px;background:#fff"></div>
<div class="a" style="left:172px;top:411px;width:58px;height:1px;background:#c5c2b0"></div><div class="a" style="left:172px;top:412px;width:58px;height:1px;background:#fff"></div>
<div class="a" style="left:172px;top:446px;width:58px;height:1px;background:#c5c2b0"></div><div class="a" style="left:172px;top:447px;width:58px;height:1px;background:#fff"></div>
<div class="a" style="left:172px;top:509px;width:58px;height:1px;background:#c5c2b0"></div><div class="a" style="left:172px;top:510px;width:58px;height:1px;background:#fff"></div>
<div class="a" style="left:172px;top:544px;width:58px;height:1px;background:#c5c2b0"></div><div class="a" style="left:172px;top:545px;width:58px;height:1px;background:#fff"></div>
<div class="a" style="left:172px;top:579px;width:58px;height:1px;background:#c5c2b0"></div><div class="a" style="left:172px;top:580px;width:58px;height:1px;background:#fff"></div>
<svg style="left:176px;top:148px" width="22" height="20" viewBox="0 0 22 20" ><defs><linearGradient id="gyl" x1="0" y1="0" x2="0" y2="1"><stop offset="0" stop-color="#fff0a0"/><stop offset="1" stop-color="#e8b830"/></linearGradient></defs><rect x=".4" y=".4" width="7" height="12" fill="url(#gyl)" stroke="#9a8030" stroke-width=".7"/><rect x="7.400" y=".4" width="7" height="12" fill="url(#gyl)" stroke="#9a8030" stroke-width=".7"/><rect x="14.400" y=".4" width="7" height="12" fill="url(#gyl)" stroke="#9a8030" stroke-width=".7"/><path d="M0 13h22" stroke="#e02020" stroke-width="1" stroke-dasharray="1.500 5.500"/><g font-family="Liberation Sans,sans-serif" font-weight="bold" font-size="8.500" fill="#2828a0"><text x="1.700" y="9.500">1</text><text x="8.700" y="9.500">2</text><text x="15.700" y="9.500">3</text></g><g font-family="Liberation Sans,sans-serif" font-weight="bold" font-size="6" fill="#111"><text x="-.5" y="19.500">1</text><text x="6" y="19.500">2</text><text x="12.500" y="19.500">3</text><text x="18.500" y="19.500">4</text></g></svg>
<svg style="left:204px;top:148px" width="23" height="20" viewBox="0 0 23 20" ><rect x=".4" y=".4" width="7" height="8" fill="url(#gyl)" stroke="#9a8030" stroke-width=".7"/><rect x="7.400" y=".4" width="7" height="8" fill="url(#gyl)" stroke="#9a8030" stroke-width=".7"/><rect x="14.400" y=".4" width="7" height="8" fill="url(#gyl)" stroke="#9a8030" stroke-width=".7"/><g transform="rotate(12 11 11)"><rect x="1.400" y="4" width="7" height="12" fill="url(#gyl)" stroke="#9a8030" stroke-width=".7"/><rect x="8.400" y="4" width="7" height="12" fill="url(#gyl)" stroke="#9a8030" stroke-width=".7"/><rect x="15.400" y="4" width="7" height="12" fill="url(#gyl)" stroke="#9a8030" stroke-width=".7"/><g font-family="Liberation Sans,sans-serif" font-weight="bold" font-style="italic" font-size="8.500" fill="#2828a0"><text x="2.700" y="13.500">1</text><text x="9.700" y="13.500">2</text><text x="16.700" y="13.500">3</text></g></g></svg>
<svg style="left:176px;top:179px" width="22" height="13" viewBox="0 0 22 13" ><rect x=".4" y=".4" width="7" height="12" fill="url(#gyl)" stroke="#9a8030" stroke-width=".7"/><rect x="7.400" y=".4" width="7" height="12" fill="url(#gyl)" stroke="#9a8030" stroke-width=".7"/><rect x="14.400" y=".4" width="7" height="12" fill="url(#gyl)" stroke="#9a8030" stroke-width=".7"/><path d="M2 3.500l3.500 3-3.500 3M9.500 3.500v5.500h3.500M19.500 3.500l-3 3 3 3" fill="none" stroke="#e02020" stroke-width="1.200"/></svg>
<svg style="left:176px;top:210px" width="20" height="17" viewBox="0 0 20 17" ><rect x="0.4" y="0.4" width="3.300" height="2.750" fill="url(#gyl)" stroke="#9a8030" stroke-width=".7"/><rect x="3.6999999999999997" y="0.4" width="3.300" height="2.750" fill="url(#gyl)" stroke="#9a8030" stroke-width=".7"/><rect x="0.4" y="3.15" width="3.300" height="2.750" fill="url(#gyl)" stroke="#9a8030" stroke-width=".7"/><rect x="3.6999999999999997" y="3.15" width="3.300" height="2.750" fill="url(#gyl)" stroke="#9a8030" stroke-width=".7"/><rect x="0.4" y="5.9" width="3.300" height="2.750" fill="url(#gyl)" stroke="#9a8030" stroke-width=".7"/><rect x="3.6999999999999997" y="5.9" width="3.300" height="2.750" fill="url(#gyl)" stroke="#9a8030" stroke-width=".7"/><rect x="0.4" y="8.65" width="3.300" height="2.750" fill="url(#gyl)" stroke="#9a8030" stroke-width=".7"/><rect x="3.6999999999999997" y="8.65" width="3.300" height="2.750" fill="url(#gyl)" stroke="#9a8030" stroke-width=".7"/><rect x="0.4" y="11.4" width="3.300" height="2.750" fill="url(#gyl)" stroke="#9a8030" stroke-width=".7"/><rect x="3.6999999999999997" y="11.4" width="3.300" height="2.750" fill="url(#gyl)" stroke="#9a8030" stroke-width=".7"/><rect x="0.4" y="14.15" width="3.300" height="2.750" fill="url(#gyl)" stroke="#9a8030" stroke-width=".7"/><rect x="3.6999999999999997" y="14.15" width="3.300" height="2.750" fill="url(#gyl)" stroke="#9a8030" stroke-width=".7"/><rect x="7.0" y="11.4" width="3.200" height="2.750" fill="url(#gyl)" stroke="#9a8030" stroke-width=".7"/><rect x="7.0" y="14.15" width="3.200" height="2.750" fill="url(#gyl)" stroke="#9a8030" stroke-width=".7"/><rect x="10.2" y="11.4" width="3.200" height="2.750" fill="url(#gyl)" stroke="#9a8030" stroke-width=".7"/><rect x="10.2" y="14.15" width="3.200" height="2.750" fill="url(#gyl)" stroke="#9a8030" stroke-width=".7"/><rect x="13.4" y="11.4" width="3.200" height="2.750" fill="url(#gyl)" stroke="#9a8030" stroke-width=".7"/><rect x="13.4" y="14.15" width="3.200" height="2.750" fill="url(#gyl)" stroke="#9a8030" stroke-width=".7"/><rect x="16.6" y="11.4" width="3.200" height="2.750" fill="url(#gyl)" stroke="#9a8030" stroke-width=".7"/><rect x="16.6" y="14.15" width="3.200" height="2.750" fill="url(#gyl)" stroke="#9a8030" stroke-width=".7"/></svg>
<svg style="left:204px;top:210px" width="21" height="22" viewBox="0 0 21 22" ><rect x="0.4" y="0.4" width="3.300" height="2.750" fill="url(#gyl)" stroke="#9a8030" stroke-width=".7"/><rect x="3.6999999999999997" y="0.4" width="3.300" height="2.750" fill="url(#gyl)" stroke="#9a8030" stroke-width=".7"/><rect x="0.4" y="3.15" width="3.300" height="2.750" fill="url(#gyl)" stroke="#9a8030" stroke-width=".7"/><rect x="3.6999999999999997" y="3.15" width="3.300" height="2.750" fill="url(#gyl)" stroke="#9a8030" stroke-width=".7"/><rect x="0.4" y="5.9" width="3.300" height="2.750" fill="url(#gyl)" stroke="#9a8030" stroke-width=".7"/><rect x="3.6999999999999997" y="5.9" width="3.300" height="2.750" fill="url(#gyl)" stroke="#9a8030" stroke-width=".7"/><rect x="0.4" y="8.65" width="3.300" height="2.750" fill="url(#gyl)" stroke="#9a8030" stroke-width=".7"/><rect x="3.6999999999999997" y="8.65" width="3.300" height="2.750" fill="url(#gyl)" stroke="#9a8030" stroke-width=".7"/><rect x="0.4" y="11.4" width="3.300" height="2.750" fill="url(#gyl)" stroke="#9a8030" stroke-width=".7"/><rect x="3.6999999999999997" y="11.4" width="3.300" height="2.750" fill="url(#gyl)" stroke="#9a8030" stroke-width=".7"/><rect x="0.4" y="14.15" width="3.300" height="2.750" fill="url(#gyl)" stroke="#9a8030" stroke-width=".7"/><rect x="3.6999999999999997" y="14.15" width="3.300" height="2.750" fill="url(#gyl)" stroke="#9a8030" stroke-width=".7"/><g transform="rotate(24 7 12)"><rect x="7.0" y="11.4" width="3.400" height="2.750" fill="url(#gyl)" stroke="#9a8030" stroke-width=".7"/><rect x="7.0" y="14.15" width="3.400" height="2.750" fill="url(#gyl)" stroke="#9a8030" stroke-width=".7"/><rect x="10.4" y="11.4" width="3.400" height="2.750" fill="url(#gyl)" stroke="#9a8030" stroke-width=".7"/><rect x="10.4" y="14.15" width="3.400" height="2.750" fill="url(#gyl)" stroke="#9a8030" stroke-width=".7"/><rect x="13.8" y="11.4" width="3.400" height="2.750" fill="url(#gyl)" stroke="#9a8030" stroke-width=".7"/><rect x="13.8" y="14.15" width="3.400" height="2.750" fill="url(#gyl)" stroke="#9a8030" stroke-width=".7"/><rect x="17.2" y="11.4" width="3.400" height="2.750" fill="url(#gyl)" stroke="#9a8030" stroke-width=".7"/><rect x="17.2" y="14.15" width="3.400" height="2.750" fill="url(#gyl)" stroke="#9a8030" stroke-width=".7"/></g></svg>
<svg style="left:176px;top:238px" width="23" height="23" viewBox="0 0 23 23" ><defs><linearGradient id="grbL" x1="0" y1="0" x2="1" y2="1"><stop offset=".08" stop-color="#e80000"/><stop offset=".32" stop-color="#f0e820"/><stop offset=".55" stop-color="#28d020"/><stop offset=".7" stop-color="#18c838"/><stop offset=".85" stop-color="#08a8f0"/><stop offset="1" stop-color="#0848e0"/></linearGradient></defs><path d="M.500 .5h6v9.500c5 1 9.500 3 13.500 6l-2.700 4.500c-3.500-2.500-7.300-4-11.300-4.500h-5.500z" fill="url(#grbL)" stroke="#888" stroke-width=".9"/><path d="M23 19.500v3h-3z" fill="#000"/></svg>
<svg style="left:203px;top:237px" width="10" height="9" viewBox="0 0 10 9" ><rect x=".4" y=".4" width="9" height="8.200" fill="url(#grbL)" stroke="#999" stroke-width=".6"/></svg>
<svg style="left:213px;top:245.5px" width="14" height="15" viewBox="0 0 14 15" ><rect x=".4" y="0.4" width="3.2" height="3.2" fill="#fff" stroke="#555" stroke-width=".7"/><path d="M5.0 2.0h8.0" stroke="#2060d0" stroke-width="1.3" stroke-dasharray="2.0 1.0"/><rect x=".4" y="5.5" width="3.2" height="3.2" fill="#30a030" stroke="#555" stroke-width=".7"/><path d="M5.0 7.1h8.0" stroke="#2060d0" stroke-width="1.3" stroke-dasharray="2.0 1.0"/><rect x=".4" y="10.6" width="3.2" height="3.2" fill="#fff" stroke="#555" stroke-width=".7"/><path d="M5.0 12.2h8.0" stroke="#2060d0" stroke-width="1.3" stroke-dasharray="2.0 1.0"/></svg>
<svg style="left:176px;top:266px" width="23" height="23" viewBox="0 0 23 23" ><path d="M.500 .5h6v9.500c5 1 9.500 3 13.500 6l-2.700 4.500c-3.500-2.500-7.300-4-11.300-4.500h-5.500z" fill="url(#gyl)" stroke="#777" stroke-width=".9"/><path d="M2 2.500l3 3M5 2.500l-3 3M2 7l3 3M5 7l-3 3M2 11.500l3 3M5 11.500l-3 3M8 12l3 3.500M11.500 12l-3.500 3.500M13.500 15l3 3.500M17 15l-3.500 3.500" stroke="#e02020" stroke-width="1"/><path d="M23 19.500v3h-3z" fill="#000"/></svg>
<svg style="left:203px;top:265px" width="10" height="9" viewBox="0 0 10 9" ><rect x=".4" y=".4" width="9" height="8.200" fill="url(#gyl)" stroke="#8a7020" stroke-width=".6"/><path d="M2.500 2l5 5M7.500 2l-5 5" stroke="#e02020" stroke-width="1.500"/></svg>
<svg style="left:213px;top:273.5px" width="14" height="15" viewBox="0 0 14 15" ><rect x=".4" y="0.4" width="3.2" height="3.2" fill="#fff" stroke="#555" stroke-width=".7"/><path d="M5.0 2.0h8.0" stroke="#2060d0" stroke-width="1.3" stroke-dasharray="2.0 1.0"/><rect x=".4" y="5.5" width="3.2" height="3.2" fill="#30a030" stroke="#555" stroke-width=".7"/><path d="M5.0 7.1h8.0" stroke="#2060d0" stroke-width="1.3" stroke-dasharray="2.0 1.0"/><rect x=".4" y="10.6" width="3.2" height="3.2" fill="#fff" stroke="#555" stroke-width=".7"/><path d="M5.0 12.2h8.0" stroke="#2060d0" stroke-width="1.3" stroke-dasharray="2.0 1.0"/></svg>
<svg style="left:176px;top:294px" width="23" height="23" viewBox="0 0 23 23" ><path d="M.500 .5h6v9.500c5 1 9.500 3 13.500 6l-2.700 4.500c-3.500-2.500-7.300-4-11.300-4.500h-5.500z" fill="url(#gyl)" stroke="#777" stroke-width=".9"/><path d="M3.500 2v4l-2 2M3.500 6l2.500-1M3.500 9.500v4l-2 1.500M3.500 13.500l3-1M12 14l1 3.500-2 1.500M13 17.500l2.500-.5" stroke="#1060d0" stroke-width="1.100" fill="none"/><path d="M23 19.500v3h-3z" fill="#000"/></svg>
<svg style="left:203px;top:293px" width="10" height="9" viewBox="0 0 10 9" ><rect x=".4" y=".4" width="9" height="8.200" fill="url(#gyl)" stroke="#8a7020" stroke-width=".6"/><path d="M5.500 1.500v4l-3 2M5.500 5.500l3-.5" stroke="#1060d0" stroke-width="1.200" fill="none"/></svg>
<svg style="left:213px;top:301.5px" width="14" height="15" viewBox="0 0 14 15" ><rect x=".4" y="0.4" width="3.2" height="3.2" fill="#fff" stroke="#555" stroke-width=".7"/><path d="M5.0 2.0h8.0" stroke="#2060d0" stroke-width="1.3" stroke-dasharray="2.0 1.0"/><rect x=".4" y="5.5" width="3.2" height="3.2" fill="#30a030" stroke="#555" stroke-width=".7"/><path d="M5.0 7.1h8.0" stroke="#2060d0" stroke-width="1.3" stroke-dasharray="2.0 1.0"/><rect x=".4" y="10.6" width="3.2" height="3.2" fill="#fff" stroke="#555" stroke-width=".7"/><path d="M5.0 12.2h8.0" stroke="#2060d0" stroke-width="1.3" stroke-dasharray="2.0 1.0"/></svg>
<svg style="left:176px;top:322px" width="23" height="22" viewBox="0 0 23 22" ><defs><linearGradient id="gsq" x1="0" y1="0" x2="1" y2="1"><stop offset="0" stop-color="#fff0c0"/><stop offset="1" stop-color="#f0b840"/></linearGradient></defs><rect x=".5" y=".5" width="7.500" height="7.500" fill="url(#gsq)" stroke="#a88830" stroke-width=".8"/><rect x="11" y="10" width="7.500" height="7.500" fill="url(#gsq)" stroke="#a88830" stroke-width=".8"/><rect x="14.500" y="14" width="7.500" height="7.500" fill="url(#gsq)" stroke="#a88830" stroke-width=".8"/><path d="M10.500 2.500c3.500-1 6 1.500 6.500 5" fill="none" stroke="#b02010" stroke-width="1.500"/><path d="M9 2.500l3-2.200v4.200zM17 9.500l-2-3h4z" fill="#b02010"/></svg>
<svg style="left:177px;top:357px" width="21" height="21" viewBox="0 0 21 21" ><defs><linearGradient id="gcl" x1="0" y1="0" x2="0" y2="1"><stop offset="0" stop-color="#eee"/><stop offset="1" stop-color="#c8c8c8"/></linearGradient></defs><rect x=".5" y="8" width="19.500" height="12.500" rx="1.500" fill="url(#gcl)" stroke="#666" stroke-width=".9"/><path d="M.500 4.300l19.500-3.300v3.500l-19.500 3.300z" fill="#222"/><path d="M2.500 7l2-3.500M6.500 6.300l2-3.500M10.500 5.600l2-3.500M14.500 4.900l2-3.500M18.500 4.200l1.500-2.500" stroke="#fff" stroke-width="1.600"/><path d="M.500 8.300h19.500" stroke="#333" stroke-width="1.200"/><path d="M2 14c4 0 6 0 9-3M2 14c4 0 6 0 9 3" fill="none" stroke="#308030" stroke-width="1.200"/><path d="M12 10.500a3.500 3.500 0 1 1-.5 6" fill="none" stroke="#e02020" stroke-width="1.200"/><path d="M10.500 10l3-.8-1 3z" fill="#e02020"/></svg>
<svg style="left:205px;top:357px" width="21" height="21" viewBox="0 0 21 21" ><defs><linearGradient id="gcl" x1="0" y1="0" x2="0" y2="1"><stop offset="0" stop-color="#eee"/><stop offset="1" stop-color="#c8c8c8"/></linearGradient></defs><rect x=".5" y="8" width="19.500" height="12.500" rx="1.500" fill="url(#gcl)" stroke="#666" stroke-width=".9"/><path d="M.500 4.300l19.500-3.300v3.500l-19.500 3.300z" fill="#222"/><path d="M2.500 7l2-3.500M6.500 6.300l2-3.500M10.500 5.600l2-3.500M14.500 4.900l2-3.500M18.500 4.200l1.500-2.500" stroke="#fff" stroke-width="1.600"/><path d="M.500 8.300h19.500" stroke="#333" stroke-width="1.200"/><path d="M2 18h16M2 18l10-6" fill="none" stroke="#308030" stroke-width="1.200"/><path d="M14.500 9.500c3 1 3.500 4 2.500 6.500" fill="none" stroke="#e02020" stroke-width="1.200"/><path d="M12.500 9.500l3.500-1.500-.8 3.500z" fill="#e02020"/></svg>
<svg style="left:177px;top:385px" width="21" height="21" viewBox="0 0 21 21" ><defs><linearGradient id="gcl" x1="0" y1="0" x2="0" y2="1"><stop offset="0" stop-color="#eee"/><stop offset="1" stop-color="#c8c8c8"/></linearGradient></defs><rect x=".5" y="8" width="19.500" height="12.500" rx="1.500" fill="url(#gcl)" stroke="#666" stroke-width=".9"/><path d="M.500 4.300l19.500-3.300v3.500l-19.500 3.300z" fill="#222"/><path d="M2.500 7l2-3.500M6.500 6.300l2-3.500M10.500 5.600l2-3.500M14.500 4.900l2-3.500M18.500 4.200l1.500-2.500" stroke="#fff" stroke-width="1.600"/><path d="M.500 8.300h19.500" stroke="#333" stroke-width="1.200"/><path d="M3 9.500v10M3 14h15" stroke="#308030" stroke-width="1.200"/><path d="M3 14c2-6 5-6 7.500 0s5.500 6 7.500 0" fill="none" stroke="#e02020" stroke-width="1.200"/></svg>
<svg style="left:205px;top:387.5px" width="19" height="21" viewBox="0 0 19 21" ><rect x=".4" y="0.4" width="4.5" height="4.5" fill="#fff" stroke="#555" stroke-width=".7"/><path d="M7.1 2.8h11.4" stroke="#2060d0" stroke-width="1.8" stroke-dasharray="2.8 1.4"/><rect x=".4" y="7.6" width="4.5" height="4.5" fill="#30a030" stroke="#555" stroke-width=".7"/><path d="M7.1 10.1h11.4" stroke="#2060d0" stroke-width="1.8" stroke-dasharray="2.8 1.4"/><rect x=".4" y="14.9" width="4.5" height="4.5" fill="#fff" stroke="#555" stroke-width=".7"/><path d="M7.1 17.3h11.4" stroke="#2060d0" stroke-width="1.8" stroke-dasharray="2.8 1.4"/></svg>
<svg style="left:178px;top:421px" width="19" height="21" viewBox="0 0 19 21" ><path d="M9.500 12v-8M9.500 12l-6 6M9.500 12l6 6" stroke="#1870e0" stroke-width="1.500"/><path d="M9.500 0l3 4.500h-6zM.500 20.500l1-5 4 4zM18.500 20.500l-1-5-4 4z" fill="#1870e0"/></svg>
<svg style="left:205px;top:422px" width="21" height="18" viewBox="0 0 21 18" ><rect x=".5" y=".5" width="20" height="17" rx="1.500" fill="#fff" stroke="#8a8060" stroke-width=".9"/><path d="M.500 4.500v-2.500a1.500 1.500 0 0 1 1.500-1.500h17a1.500 1.500 0 0 1 1.500 1.500v2.500z" fill="#1870d0"/><rect x="2" y="1.600" width="3" height="1.200" fill="#fff"/><path d="M3.500 7.500h4M9.500 7.500h8M3.500 10.500h4M9.500 10.500h8" stroke="#333" stroke-width="1.100"/><rect x="1" y="12.5" width="19" height="5" fill="#b8a880"/><path d="M3 15h3.500M8.75 15h3.500M14.5 15h3.500" stroke="#6a5a38" stroke-width="2"/></svg>
<svg style="left:176px;top:456px" width="23" height="21" viewBox="0 0 23 21" ><rect x=".5" y=".5" width="21.500" height="19.500" rx="1" fill="#fff" stroke="#555" stroke-width=".9"/><rect x="1" y="1" width="20.500" height="6.500" fill="#c8c8c8"/><path d="M11.250 .5v19.500M.500 7.500h21.500M.500 11.500h21.500M.500 15.500h21.500" stroke="#555" stroke-width=".9"/><path d="M4 2l3.500 4M7.500 2l-3.500 4M14.500 2l2 2 2-2M16.500 4v2.500" stroke="#e02020" stroke-width="1.200" fill="none"/></svg>
<svg style="left:205px;top:457px" width="21" height="18" viewBox="0 0 21 18" ><rect x=".5" y=".5" width="20" height="17" rx="1.500" fill="#fff" stroke="#8a8060" stroke-width=".9"/><path d="M.500 4.500v-2.500a1.500 1.500 0 0 1 1.500-1.500h17a1.500 1.500 0 0 1 1.500 1.500v2.500z" fill="#1870d0"/><rect x="2" y="1.600" width="3" height="1.200" fill="#fff"/><path d="M3.500 7.500h4M9.500 7.500h8M3.500 10.500h4M9.500 10.500h8" stroke="#333" stroke-width="1.100"/><rect x="1" y="12.5" width="19" height="5" fill="#b8a880"/><path d="M3 15h3.500M8.75 15h3.500M14.5 15h3.500" stroke="#6a5a38" stroke-width="2"/></svg>
<svg style="left:177px;top:489px" width="20" height="12" viewBox="0 0 20 12" ><path d="M1 0v11M1 5.500h17M5.500 3v5M10 3v5M14.500 3v5" stroke="#282898" stroke-width="1.200"/><path d="M15 1.500l4 4-4 4" fill="none" stroke="#282898" stroke-width="1.200"/></svg><svg style="left:195px;top:502px" width="4" height="4" viewBox="0 0 4 4" ><path d="M3.500 0v3.500h-3.500z" fill="#000"/></svg>
<svg style="left:205px;top:487px" width="21" height="14" viewBox="0 0 21 14" ><path d="M1.500 12l5.500-9 5 9 7-10.500" fill="none" stroke="#d02010" stroke-width="1.300"/><rect x="0" y="10.500" width="3" height="3" fill="#d02010"/><rect x="5.500" y="1.500" width="3" height="3" fill="#d02010"/><rect x="10.500" y="10.500" width="3" height="3" fill="#d02010"/><rect x="17.500" y="0" width="3" height="3" fill="#d02010"/></svg>
<svg style="left:178px;top:522px" width="19" height="15" viewBox="0 0 19 15" ><path d="M2 3c3-3 5 1 8-1s5-2 8 0l-3 10c-3-2-5 0-8 1s-5-1-7-1z" fill="url(#gyl)" stroke="#8a7020" stroke-width=".9"/><path d="M7 2.500l-2 10M12 1.500l-2 10.500M1.500 7c3-2 6 1 8-.5s5-2 7.500-.5" fill="none" stroke="#8a7020" stroke-width=".8"/></svg>
<svg style="left:206px;top:518px" width="19" height="15" viewBox="0 0 19 15" ><path d="M2 3c3-3 5 1 8-1s5-2 8 0l-3 10c-3-2-5 0-8 1s-5-1-7-1z" fill="url(#gyl)" stroke="#8a7020" stroke-width=".9"/><path d="M7 2.500l-2 10M12 1.500l-2 10.500M1.500 7c3-2 6 1 8-.5s5-2 7.500-.5" fill="none" stroke="#8a7020" stroke-width=".8"/></svg>
<svg style="left:208px;top:530px" width="16" height="11" viewBox="0 0 16 11" ><rect x=".6" y=".6" width="6" height="5" fill="#f0f0fa" stroke="#2848b0" stroke-width="1"/><rect x="4" y="2.800" width="6" height="5" fill="#f0f0fa" stroke="#2848b0" stroke-width="1"/><rect x="8" y="5.200" width="6" height="5" fill="#f0f0fa" stroke="#2848b0" stroke-width="1"/></svg>
<svg style="left:177px;top:555px" width="21" height="20" viewBox="0 0 21 20" ><path d="M.600 .6h6.500v11h7v6.500h-13.500z" fill="url(#grbL)" stroke="#111" stroke-width="1"/><path d="M14 11.500h6v6.500h-6" fill="#fff" stroke="#111" stroke-width="1"/><path d="M13.500 -1v20" stroke="#e02020" stroke-width="1.100" stroke-dasharray="2.500 1.500"/></svg>
<svg style="left:205px;top:555px" width="21" height="18" viewBox="0 0 21 18" ><rect x=".5" y=".5" width="20" height="17" rx="1.500" fill="#fff" stroke="#8a8060" stroke-width=".9"/><path d="M.500 4.500v-2.500a1.500 1.500 0 0 1 1.500-1.500h17a1.500 1.500 0 0 1 1.500 1.500v2.500z" fill="#1870d0"/><rect x="2" y="1.600" width="3" height="1.200" fill="#fff"/><path d="M3.500 7.500h4M9.500 7.500h8M3.500 10.500h4M9.500 10.500h8" stroke="#333" stroke-width="1.100"/><rect x="1" y="12.5" width="19" height="5" fill="#b8a880"/><path d="M3 15h3.500M8.75 15h3.500M14.5 15h3.500" stroke="#6a5a38" stroke-width="2"/></svg>
<svg style="left:180px;top:589px" width="17" height="20" viewBox="0 0 17 20" ><rect x="0.4" y="3.0" width="3" height="3.200" fill="url(#gyl)" stroke="#9a8030" stroke-width=".7"/><rect x="3.4" y="3.0" width="3" height="3.200" fill="url(#gyl)" stroke="#9a8030" stroke-width=".7"/><rect x="0.4" y="6.2" width="3" height="3.200" fill="url(#gyl)" stroke="#9a8030" stroke-width=".7"/><rect x="3.4" y="6.2" width="3" height="3.200" fill="url(#gyl)" stroke="#9a8030" stroke-width=".7"/><rect x="0.4" y="9.4" width="3" height="3.200" fill="url(#gyl)" stroke="#9a8030" stroke-width=".7"/><rect x="3.4" y="9.4" width="3" height="3.200" fill="url(#gyl)" stroke="#9a8030" stroke-width=".7"/><rect x="0.4" y="12.600000000000001" width="3" height="3.200" fill="url(#gyl)" stroke="#9a8030" stroke-width=".7"/><rect x="3.4" y="12.600000000000001" width="3" height="3.200" fill="url(#gyl)" stroke="#9a8030" stroke-width=".7"/><rect x="0.4" y="15.8" width="3" height="3.200" fill="url(#gyl)" stroke="#9a8030" stroke-width=".7"/><rect x="3.4" y="15.8" width="3" height="3.200" fill="url(#gyl)" stroke="#9a8030" stroke-width=".7"/><path d="M7 11l7-8M7 11l8 4" stroke="#c02010" stroke-width="1.300"/><path d="M15.500 1l-4 1 3 3zM16.500 16l-4-.5 2-3z" fill="#c02010"/></svg>
<svg style="left:205px;top:590px" width="21" height="18" viewBox="0 0 21 18" ><rect x=".5" y=".5" width="20" height="17" rx="1.500" fill="#fff" stroke="#8a8060" stroke-width=".9"/><path d="M.500 4.500v-2.500a1.500 1.500 0 0 1 1.500-1.500h17a1.500 1.500 0 0 1 1.500 1.500v2.500z" fill="#1870d0"/><rect x="2" y="1.600" width="3" height="1.200" fill="#fff"/><path d="M3.500 7.500h4M9.500 7.500h8M3.500 10.500h4M9.500 10.500h8" stroke="#333" stroke-width="1.100"/><rect x="1" y="12.5" width="19" height="5" fill="#b8a880"/><path d="M3 15h3.500M8.75 15h3.500M14.5 15h3.500" stroke="#6a5a38" stroke-width="2"/></svg>
<!-- VIEWPORT -->
<div class="a" style="left:232px;top:136px;width:792px;height:485px;background:#fff;border-left:1px solid #716f64;border-top:2px solid #dcd9c6;box-shadow:inset 0 1px 0 #8a887a;border-right:1px solid #f0eee0"></div>
<svg class="a" style="left:0;top:0" width="1024" height="768" viewBox="0 0 1024 768">
<rect x="295" y="156" width="662" height="419.5" fill="#d7d7d7" stroke="#000" stroke-width="2.4"/>
<path d="M296 553.6h3.5M956 553.6h-3.5M296 531.4h6.5M956 531.4h-6.5M296 509.2h3.5M956 509.2h-3.5M296 487.0h6.5M956 487.0h-6.5M296 464.8h3.5M956 464.8h-3.5M296 442.6h6.5M956 442.6h-6.5M296 420.4h3.5M956 420.4h-3.5M296 398.2h6.5M956 398.2h-6.5M296 376.0h3.5M956 376.0h-3.5M296 353.8h6.5M956 353.8h-6.5M296 331.6h3.5M956 331.6h-3.5M296 309.4h6.5M956 309.4h-6.5M296 287.2h3.5M956 287.2h-3.5M296 265.0h6.5M956 265.0h-6.5M296 242.8h3.5M956 242.8h-3.5M296 220.6h6.5M956 220.6h-6.5M296 198.4h3.5M956 198.4h-3.5M296 176.2h6.5M956 176.2h-6.5M333.2 157v3.5M333.2 574.5v-3.5M371.5 157v6.5M371.5 574.5v-6.5M409.8 157v3.5M409.8 574.5v-3.5M448.0 157v6.5M448.0 574.5v-6.5M486.2 157v3.5M486.2 574.5v-3.5M524.5 157v6.5M524.5 574.5v-6.5M562.8 157v3.5M562.8 574.5v-3.5M601.0 157v6.5M601.0 574.5v-6.5M639.2 157v3.5M639.2 574.5v-3.5M677.5 157v6.5M677.5 574.5v-6.5M715.8 157v3.5M715.8 574.5v-3.5M754.0 157v6.5M754.0 574.5v-6.5M792.2 157v3.5M792.2 574.5v-3.5M830.5 157v6.5M830.5 574.5v-6.5M868.8 157v3.5M868.8 574.5v-3.5M907.0 157v6.5M907.0 574.5v-6.5M945.2 157v3.5M945.2 574.5v-3.5" stroke="#000" stroke-width="1.5" fill="none"/>
<polyline points="295,575.5 604.25,216.75 615,210.8 626.75,205.5 640.5,200.5 654.25,196 673,191.5 693,187.25 713,183.5 744,179 768,175.5 800,172 850,167 900,162.3 955,158" fill="none" stroke="#f00" stroke-width="2" stroke-linejoin="round"/>
<g font-family="DejaVu Sans, Liberation Sans, sans-serif" font-size="9.5" fill="#000" letter-spacing="0.55">
<text x="292" y="577.8" text-anchor="end">0.</text>
<text x="292" y="534.9" text-anchor="end">50.</text>
<text x="292" y="490.5" text-anchor="end">100.</text>
<text x="292" y="446.1" text-anchor="end">150.</text>
<text x="292" y="401.7" text-anchor="end">200.</text>
<text x="292" y="357.3" text-anchor="end">250.</text>
<text x="292" y="312.9" text-anchor="end">300.</text>
<text x="292" y="268.5" text-anchor="end">350.</text>
<text x="292" y="224.1" text-anchor="end">400.</text>
<text x="292" y="179.7" text-anchor="end">450.</text>
<text x="295.8" y="587.6" text-anchor="middle">0.0</text>
<text x="372.3" y="587.6" text-anchor="middle">0.5</text>
<text x="448.8" y="587.6" text-anchor="middle">1.0</text>
<text x="525.3" y="587.6" text-anchor="middle">1.5</text>
<text x="601.8" y="587.6" text-anchor="middle">2.0</text>
<text x="678.3" y="587.6" text-anchor="middle">2.5</text>
<text x="754.8" y="587.6" text-anchor="middle">3.0</text>
<text x="831.3" y="587.6" text-anchor="middle">3.5</text>
<text x="907.8" y="587.6" text-anchor="middle">4.0</text>
<text x="960.5" y="587.6">[x1.E-3]</text>
</g>
<text x="626" y="606.6" text-anchor="middle" font-family="Liberation Sans, sans-serif" font-size="14.5">strain</text>
<text transform="translate(258,363.5) rotate(-90)" text-anchor="middle" font-family="Liberation Sans, sans-serif" font-size="14.5" letter-spacing="0.8">stress(MPa)</text>
</svg>
<div class="a" style="left:170px;top:621px;width:854px;height:34px;background:linear-gradient(#f8f7f0,#f1efe3 50%,#e6e3d2)"></div>
<svg style="left:966px;top:623px" width="56" height="34" viewBox="0 0 56 34" ><path d="M9.500 2.300c3.500-1 8.500-.8 9.500 1s-3 5.500-8 7.500" fill="none" stroke="#cc2a1a" stroke-width="1.700" stroke-linecap="round"/><path d="M4 13.800l7-.2c4.500 0 4.500 3.500 1.500 6.500-2.500 2.500-7 4-11.200 4.500l7-10.500" fill="none" stroke="#2b2b8c" stroke-width="1.700" stroke-linejoin="round" stroke-linecap="round"/><path d="M25.300 9.800c-3.300-.5-7.300-.3-8.300 1.200-1.200 2 7 4 7 7s-6.500 4.500-11 4.300" fill="none" stroke="#e08a1a" stroke-width="1.900" stroke-linecap="round"/><text x="7.300" y="31.600" font-family="Liberation Sans,sans-serif" font-weight="bold" font-style="italic" font-size="9" fill="#2b2b8c" textLength="47.500" lengthAdjust="spacingAndGlyphs">SIMULIA</text></svg>
<!-- MESSAGE -->
<div class="a" style="left:0;top:655px;width:1024px;height:83px;background:#f7f6ee"></div>
<div class="a" style="left:1006px;top:659px;width:18px;height:79px;background:#efede0"></div>
<div class="a" style="left:4px;top:698px;width:36px;height:35px;border:1px solid #919b9c;border-right:none;border-radius:3px 0 0 3px;background:linear-gradient(90deg,#fdfdfb,#f1f0e8)"></div>
<div class="a" style="left:2px;top:659px;width:39px;height:39px;border:1px solid #919b9c;border-right:none;border-radius:3px 0 0 3px;background:#fcfcfe"></div>
<div class="a" style="left:2px;top:659px;width:3px;height:39px;border-radius:3px 0 0 3px;background:linear-gradient(90deg,#e68b2c,#ffc73c)"></div>
<svg style="left:10px;top:668px" width="21" height="22" viewBox="0 0 21 22" ><defs><linearGradient id="ggr" x1="0" y1="0" x2="1" y2="1"><stop offset="0" stop-color="#f4f4f0"/><stop offset="1" stop-color="#c8c8c0"/></linearGradient></defs><rect x="3" y="1" width="16.500" height="17.500" fill="url(#ggr)" stroke="#555" stroke-width="1"/><path d="M.800 20.800l1.500-4.700 6.500-5.800 3.200 3.200-6.500 5.800z" fill="#e8b830" stroke="#333" stroke-width="1"/><path d="M.800 20.800l1.200-3.200 2.200 2.200z" fill="#222"/></svg>
<div class="a" style="left:10px;top:703px;width:24px;height:24px;background:linear-gradient(#f4e490,#ecd470);border:1px solid #222;box-shadow:inset 1px 1px 0 #fff8c0,inset -1px -1px 0 #a89030"></div>
<div class="a" style="left:14px;top:707px;font-family:'Liberation Sans',sans-serif;font-weight:bold;font-size:12px;letter-spacing:-1.300px;line-height:14px;transform:scale(1,1.350)">&gt;&gt;&gt;</div>
<div class="a" style="left:40px;top:660px;width:966px;height:75px;background:#fff;border:1px solid #7f9db9;overflow:hidden"><div class="a" style="left:0;top:0;width:940px;height:2px;background:#fff;z-index:2"></div>
<div class="t l ml" style="left:4px;top:-2px"><span class="c">作业</span> beam3:  Analysis Input File Processor <span class="c">成功完成</span>.</div>
<div class="t l ml" style="left:4px;top:10px"><span class="c">作业</span> beam3:  Abaqus/Standard <span class="c">成功完成</span>.</div>
<div class="t l ml" style="left:4px;top:22px"><span class="c">作业</span> beam3 <span class="c">成功完成</span>.</div>
<div class="t l ml" style="left:4px;top:34px">XY <span class="c">数据</span> <span class="c q">“</span>XYData-1<span class="c q">”</span> <span class="c">已创建</span>.</div>
<div class="t l ml" style="left:4px;top:46px">XY <span class="c">数据</span> <span class="c q">“</span>XYData-2<span class="c q">”</span> <span class="c">已创建</span>.</div>
<div class="t l ml" style="left:4px;top:58px">XY <span class="c">数据已从一个操作创建</span>.</div>
</div>
<div class="a" style="left:989px;top:660px;width:16px;height:74px;background:#f4f3ee"></div>
<div class="a" style="left:990px;top:662px;width:15px;height:15px;border:1px solid #b4c7f5;border-radius:2px;background:linear-gradient(135deg,#d5e0fd,#b9cbf8)"></div><svg style="left:990px;top:662px" width="15" height="15" viewBox="0 0 15 15" ><path d="M4 9.500l3.500-3.500 3.500 3.500" fill="none" stroke="#4d6185" stroke-width="2"/></svg>
<div class="a" style="left:990px;top:718px;width:15px;height:15px;border:1px solid #b4c7f5;border-radius:2px;background:linear-gradient(135deg,#d5e0fd,#b9cbf8)"></div><svg style="left:990px;top:718px" width="15" height="15" viewBox="0 0 15 15" ><path d="M4 6l3.500 3.500 3.500-3.500" fill="none" stroke="#4d6185" stroke-width="2"/></svg>
<div class="a" style="left:990px;top:690px;width:15px;height:26px;border:1px solid #b4c7f5;border-radius:2px;background:linear-gradient(90deg,#d5e0fd,#b9cbf8)"></div>
<div class="a" style="left:994px;top:699px;width:7px;height:8px;background:repeating-linear-gradient(#8ca2d8 0 1px,#e8eefe 1px 2px)"></div>
<svg style="left:1008px;top:722px" width="14" height="14" viewBox="0 0 14 14" ><path d="M11 3h2v2h-2zM11 7h2v2h-2zM7 7h2v2h-2zM11 11h2v2h-2zM7 11h2v2h-2zM3 11h2v2h-2z" fill="#b8b4a2"/></svg>
<!-- TASKBAR -->
<div class="a" style="left:0;top:738px;width:1024px;height:30px;background:linear-gradient(#1f50c0 0,#3a80f0 2px,#2a6ae8 5px,#245edc 9px,#2460e0 22px,#1e52c4 28px,#1941a5 30px)"></div>
<div class="a" style="left:948px;top:738px;width:76px;height:30px;background:linear-gradient(#0c62c0 0,#1fa8f4 2px,#14a0f0 5px,#1294e8 10px,#1296ea 22px,#0f80d0 28px,#0c5cb0 30px);border-left:1px solid #0a3a90"></div>
<div class="a" style="left:0;top:738px;width:97px;height:30px;border-radius:0 11px 14px 0/0 14px 16px 0;background:linear-gradient(90deg,rgba(0,0,0,0) 80%,rgba(10,50,10,.4) 100%),linear-gradient(#2f7f2f 0,#6ab868 2px,#4aa24a 5px,#3c963e 9px,#38903a 20px,#2f8232 26px,#266a29 30px);box-shadow:1px 0 2px #123a80"></div>
<svg style="left:10px;top:742.5px" width="21" height="19" viewBox="0 0 21 19" ><path d="M2.500 2.500c2.200-1.500 4.800-1.500 7.200 0l-1.500 6.300c-2.200-1.300-4.800-1.300-7 0z" fill="#e8522a"/><path d="M10.800 3c2.200 1.400 4.800 1.400 7.400 0l-1.500 6.300c-2.600 1.400-5.200 1.400-7.400 0z" fill="#7cc242"/><path d="M1 10c2.200-1.300 4.800-1.300 7 0l-1.500 6.300c-2.200-1.300-4.800-1.300-7 0z" fill="#3a80e8"/><path d="M9 10.600c2.200 1.400 4.800 1.400 7.400 0l-1.500 6.300c-2.600 1.400-5.200 1.400-7.400 0z" fill="#f8c820"/></svg>
<div class="a c" style="left:36px;top:741px;font-size:19px;line-height:22px;font-style:italic;color:#fff;-webkit-text-stroke-width:0;text-shadow:1px 1px 1px #1a4a1a;transform:skewX(-8deg)">开始</div>
<svg style="left:110px;top:745px" width="15" height="15" viewBox="0 0 15 15" ><circle cx="7.500" cy="7.500" r="7.300" fill="#e8c020"/><path d="M7.500 7.500l-6.400-3.600a7.300 7.300 0 0 1 12.800 0z" fill="#e03828"/><path d="M7.500 7.500l6.400-3.600a7.300 7.300 0 0 1-6.400 10.900z" fill="#f0c820"/><path d="M7.500 7.500l0 7.300a7.300 7.300 0 0 1-6.400-10.900z" fill="#48a848"/><circle cx="7.500" cy="7.500" r="3.300" fill="#fff"/><circle cx="7.500" cy="7.500" r="2.500" fill="#3878d8"/></svg>
<svg style="left:132px;top:745px" width="16" height="15" viewBox="0 0 16 15" ><rect x="1" y="1.500" width="12" height="12.500" rx="1.500" fill="#e8f0fc" stroke="#1858b0" stroke-width="1.300"/><path d="M4 10a3.500 3.500 0 1 1 5-4" fill="none" stroke="#1848a0" stroke-width="1.500"/><path d="M9 4l3-2.500 1.500 4z" fill="#e87820"/><rect x="3" y="0" width="2" height="2.500" fill="#fff"/><rect x="9" y="0" width="2" height="2.500" fill="#fff"/></svg>
<svg style="left:155px;top:744px" width="18" height="17" viewBox="0 0 18 17" ><path d="M8.500 3.500a5.500 5.500 0 1 0 5.300 7h-3.300a2.600 2.600 0 0 1-4.600-1h8.300a5.500 5.500 0 0 0-5.700-6zm0 2.500a2.500 2.500 0 0 1 2.400 1.700h-4.900a2.500 2.500 0 0 1 2.500-1.700z" fill="#58a8f0" stroke="#2868c0" stroke-width=".5"/><path d="M2 15c-3-3 2-10 8-12.500 4-1.800 8-1 7 2.500" fill="none" stroke="#f0b020" stroke-width="1.400"/></svg>
<div class="a l" style="left:182px;top:741px;color:#c8dcfc;font-size:10px;letter-spacing:-2px;line-height:12px">»</div>
<div class="a" style="left:198px;top:741px;width:158px;height:24px;border-radius:3px;background:linear-gradient(#5a98f8 0,#3c81f3 3px,#3a7cf0 18px,#3474e4);border:1px solid #2a64d0"></div><svg style="left:209px;top:748px" width="16" height="10" viewBox="0 0 16 10" ><path d="M3 .5h10l2.500 4.500v2.500h-15v-2.500z" fill="#c8c8c8" stroke="#555" stroke-width=".8"/><path d="M.500 5h15v2.500h-15z" fill="#888"/><path d="M4 7.500l4 2 4-2" fill="#666"/></svg><div class="t" style="left:228px;top:746px;color:#fff"><span class="c">可移动磁盘</span><span class="l"> (I:)</span></div>
<div class="a" style="left:359px;top:741px;width:158px;height:24px;border-radius:3px;background:linear-gradient(#5a98f8 0,#3c81f3 3px,#3a7cf0 18px,#3474e4);border:1px solid #2a64d0"></div><svg style="left:369px;top:745px" width="16" height="16" viewBox="0 0 16 16" ><path d="M5 .5h5c1 2.500 3 4.500 4.700 6.300h-14.400c1.700-1.800 3.700-3.800 4.700-6.300z" fill="#c0c4dc"/><rect x="0" y="6.900" width="15.200" height="2.100" fill="#fff"/><path d="M.300 9.100h14.400c-1.700 1.800-3.700 3.800-4.700 6.300h-5c-1-2.500-3-4.500-4.700-6.300z" fill="#a0a6c8"/></svg><div class="t" style="left:388px;top:746px;color:#fff"><span class="l">Abaqus CAE</span></div>
<div class="a" style="left:520px;top:741px;width:158px;height:24px;border-radius:3px;background:linear-gradient(#1a4aa8,#1e52b7 30%,#2058c0);border:1px solid #17409a"></div><svg style="left:529px;top:745px" width="16" height="16" viewBox="0 0 16 16" ><path d="M5 .5h5c1 2.500 3 4.500 4.700 6.300h-14.400c1.700-1.800 3.700-3.800 4.700-6.300z" fill="#c0c4dc"/><rect x="0" y="6.900" width="15.200" height="2.100" fill="#fff"/><path d="M.300 9.100h14.400c-1.700 1.800-3.700 3.800-4.700 6.300h-5c-1-2.500-3-4.500-4.700-6.300z" fill="#a0a6c8"/></svg><div class="t" style="left:548px;top:746px;color:#fff"><span class="l">Abaqus/CAE Versi...</span></div>
<svg style="left:874px;top:747px" width="17" height="14" viewBox="0 0 17 14" ><path d="M3 0l1.500 2 1.500-1.500 1.500 1.500 1.500-1.500 1.500 1.500 1.500-1.500v3" fill="none" stroke="#111" stroke-width=".9"/><rect x=".5" y="4.500" width="15.500" height="8.500" rx="1.500" fill="#f4f0e0" stroke="#111" stroke-width="1"/><path d="M2.500 7h12M2.500 9h12M2.500 11h12" stroke="#333" stroke-width="1.200" stroke-dasharray="1.200 .8"/></svg>
<svg style="left:897px;top:747px" width="14" height="15" viewBox="0 0 14 15" ><path d="M.600 .6h11.500v10.500h-3l-.5 3-3-3h-5z" fill="#f8f080" stroke="#111" stroke-width="1.100"/><path d="M1.500 1.500h10v9h-10z" fill="none" stroke="#e8e0a0" stroke-width=".6" stroke-dasharray="1 1"/></svg><div class="a" style="left:901px;top:746px;font-family:'Liberation Sans',sans-serif;font-weight:bold;font-size:11px;line-height:13px;color:#1a1a9a">?</div>
<svg style="left:921px;top:745px" width="10" height="17" viewBox="0 0 10 17" ><rect x="3" y=".6" width="5.500" height="3.500" fill="none" stroke="#fff" stroke-width="1.200"/><rect x=".6" y="2.800" width="5.500" height="3.500" fill="#245edc" stroke="#fff" stroke-width="1.200"/><path d="M2 13h5.500l-2.750 3z" fill="#fff"/></svg>
<svg style="left:938px;top:744px" width="19" height="19" viewBox="0 0 19 19" ><defs><radialGradient id="gtr" cx=".4" cy=".3" r=".8"><stop offset="0" stop-color="#58a8f8"/><stop offset="1" stop-color="#1868d8"/></radialGradient></defs><circle cx="9.500" cy="9.500" r="8.800" fill="url(#gtr)" stroke="#a8d0f8" stroke-width=".9"/><path d="M11.500 5l-4.500 4.500 4.500 4.500" fill="none" stroke="#fff" stroke-width="2.200"/></svg>
<svg style="left:957px;top:745px" width="16" height="16" viewBox="0 0 16 16" ><rect x="6" y=".5" width="9" height="7.500" fill="#384878" stroke="#98a0c0" stroke-width=".9"/><rect x="9" y="8.500" width="3" height="2" fill="#98a0c0"/><rect x="7" y="10.500" width="7" height="1.500" fill="#c0c4d8"/><rect x=".5" y="4.500" width="8.500" height="7" fill="#58b8f0" stroke="#c0d8f0" stroke-width=".9"/><rect x="3" y="12" width="3.500" height="1.500" fill="#c0c4d8"/><ellipse cx="4.800" cy="14.500" rx="4" ry="1.300" fill="#d8d8e8"/></svg>
<div class="a" style="left:981px;top:746px;font-family:'Liberation Sans',sans-serif;font-size:11px;line-height:14px;color:#fff;letter-spacing:.4px">16:56</div>
</body></html>
